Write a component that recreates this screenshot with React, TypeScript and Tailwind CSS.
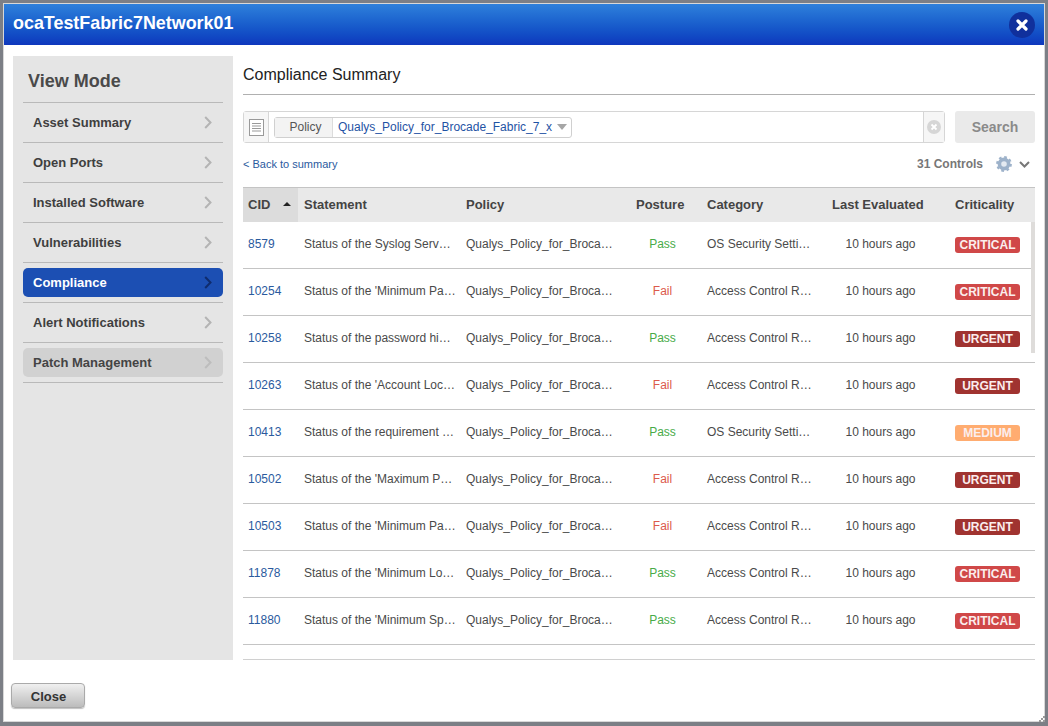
import React from "react";

const menu = ["Asset Summary", "Open Ports", "Installed Software", "Vulnerabilities", "Compliance", "Alert Notifications", "Patch Management"];

const rows = [
  ["8579", "Status of the Syslog Serv…", "Pass", "OS Security Setti…", "CRITICAL"],
  ["10254", "Status of the 'Minimum Pa…", "Fail", "Access Control R…", "CRITICAL"],
  ["10258", "Status of the password hi…", "Pass", "Access Control R…", "URGENT"],
  ["10263", "Status of the 'Account Loc…", "Fail", "Access Control R…", "URGENT"],
  ["10413", "Status of the requirement …", "Pass", "OS Security Setti…", "MEDIUM"],
  ["10502", "Status of the 'Maximum P…", "Fail", "Access Control R…", "URGENT"],
  ["10503", "Status of the 'Minimum Pa…", "Fail", "Access Control R…", "URGENT"],
  ["11878", "Status of the 'Minimum Lo…", "Pass", "Access Control R…", "CRITICAL"],
  ["11880", "Status of the 'Minimum Sp…", "Pass", "Access Control R…", "CRITICAL"],
];

const gridCols = "grid grid-cols-[55px_162px_170px_71px_125px_123px_86px]";

function Chevron({ className }: { className: string }) {
  return (
    <svg width="8" height="13" viewBox="0 0 8 13" className={className}>
      <path d="M1.2 1 L6.5 6.5 L1.2 12" fill="none" stroke="currentColor" strokeWidth="2" />
    </svg>
  );
}

function Badge({ level }: { level: string }) {
  const color = level === "CRITICAL" ? "bg-[#d04848]" : level === "URGENT" ? "bg-[#a03330]" : "bg-[#ffac70]";
  return (
    <span className={`${color} mt-px flex h-4 w-[65px] items-center justify-center rounded-[3px] text-[12px] leading-none font-bold text-[#fbeeee]`}>
      {level}
    </span>
  );
}

export default function App() {
  return (
    <div className="relative h-[726px] w-[1048px] bg-[#7c7f86] pt-[3px] pr-[3px] pb-[4px] pl-[3px] font-['Liberation_Sans',Arial,sans-serif]">
      <div className="flex h-[719px] flex-col border border-[#d8d8d8] bg-white">
        <div className="flex h-[41px] shrink-0 items-center justify-between bg-gradient-to-b from-[#2f80db] to-[#0f37bd] pr-[9px] pl-[9px]">
          <span className="pb-px text-[17.9px] leading-none font-bold text-white">ocaTestFabric7Network01</span>
          <div className="flex h-[26px] w-[26px] items-center justify-center rounded-full bg-[#10309c]">
            <svg width="12" height="12" viewBox="0 0 12 12">
              <path d="M2 2 L10 10 M10 2 L2 10" stroke="#fff" strokeWidth="3.2" strokeLinecap="round" />
            </svg>
          </div>
        </div>

        <div className="flex flex-1 gap-[10px] pt-[11px] pr-[9px] pl-[9px]">
          <aside className="flex h-[604px] w-[220px] shrink-0 flex-col bg-[#e5e5e5] px-[10px]">
            <div className="flex h-[47px] shrink-0 items-center border-b border-[#b9b9b9] pt-[3px] pl-[5px] text-[18px] leading-none font-bold text-[#4a4a4a]">
              View Mode
            </div>
            {menu.map((m) => {
              const active = m === "Compliance";
              const hover = m === "Patch Management";
              return (
                <div key={m} className="h-10 shrink-0 border-b border-[#b9b9b9] pt-[5px]">
                  <div
                    className={`flex h-[29px] items-center justify-between rounded-[5px] pr-[11px] pl-[10px] text-[13px] leading-none font-bold ${
                      active ? "bg-[#1c4fb3] text-white" : hover ? "bg-[#d1d1d1] text-[#444]" : "text-[#3f3f3f]"
                    }`}
                  >
                    <span>{m}</span>
                    <Chevron className={active ? "text-[#0f2c6e]" : hover ? "text-[#bdbdbd]" : "text-[#b4b4b4]"} />
                  </div>
                </div>
              );
            })}
          </aside>

          <main className="flex w-[792px] flex-col">
            <div className="flex h-[39px] shrink-0 items-center border-b border-[#b0b0b0] text-[16px] leading-none text-[#222]">
              Compliance Summary
            </div>

            <div className="mt-4 flex h-8 shrink-0 gap-[10px]">
              <div className="flex w-[702px] rounded-[3px] border border-[#d6d6d6] bg-white">
                <div className="flex w-[25px] shrink-0 items-center justify-center border-r border-[#d6d6d6] bg-[#f6f6f6]">
                  <svg width="15" height="17" viewBox="0 0 15 17">
                    <rect x="0.5" y="0.5" width="14" height="16" fill="#fff" stroke="#999" />
                    <path d="M3 4.5 H12 M3 7 H12 M3 9.5 H12 M3 12 H12" stroke="#999" />
                  </svg>
                </div>
                <div className="flex flex-1 items-center pl-[5px]">
                  <div className="flex h-[21px] w-[298px] items-center rounded-[3px] border border-[#d0d0d0] text-[12px] leading-none">
                    <span className="flex h-full w-[58px] shrink-0 items-center justify-center border-r border-[#dcdcdc] bg-[#f3f3f3] pl-[4px] text-[#555]">Policy</span>
                    <span className="pl-[5px] whitespace-nowrap text-[#1f53a4]">Qualys_Policy_for_Brocade_Fabric_7_x</span>
                    <svg width="10" height="6" viewBox="0 0 10 6" className="ml-[5px] shrink-0">
                      <path d="M0 0 H10 L5 6 Z" fill="#a6a6a6" />
                    </svg>
                  </div>
                </div>
                <div className="flex w-[21px] shrink-0 items-center justify-center border-l border-[#d6d6d6] bg-[#f6f6f6]">
                  <svg width="14" height="14" viewBox="0 0 14 14">
                    <circle cx="7" cy="7" r="7" fill="#d6d6d6" />
                    <path d="M4.5 4.5 L9.5 9.5 M9.5 4.5 L4.5 9.5" stroke="#fff" strokeWidth="1.8" />
                  </svg>
                </div>
              </div>
              <div className="flex w-20 items-center justify-center rounded-[3px] bg-[#eaeaea] text-[14px] leading-none font-bold text-[#8a8a8a]">Search</div>
            </div>

            <div className="flex h-[44px] shrink-0 items-center justify-between pr-[5px] pb-[2px]">
              <span className="text-[11px] leading-none text-[#2a5a9e]">&lt; Back to summary</span>
              <div className="flex items-center">
                <span className="text-[12px] leading-none font-bold text-[#777]">31 Controls</span>
                <svg width="16" height="16" viewBox="0 0 16 16" className="ml-[13px]">
                  <circle cx="8" cy="8" r="4.6" fill="#e4eaf1" stroke="#9db2ca" strokeWidth="3.6" />
                  <circle cx="8" cy="8" r="6.8" fill="none" stroke="#9db2ca" strokeWidth="2.2" strokeDasharray="2.67 2.67" />
                </svg>
                <svg width="11" height="7" viewBox="0 0 11 7" className="ml-[7px]">
                  <path d="M1 1 L5.5 5.5 L10 1" fill="none" stroke="#777" strokeWidth="2" />
                </svg>
              </div>
            </div>

            <div className={`${gridCols} h-[35px] shrink-0 border-t border-[#c4c4c4] bg-[#e9e9e9] pb-[2px] text-[13px] leading-none font-bold text-[#444]`}>
              <div className="-mb-[2px] flex items-center justify-between bg-[#dcdcdc] pr-[7px] pb-[2px] pl-[5px]">
                <span>CID</span>
                <svg width="8" height="4" viewBox="0 0 8 4"><path d="M4 0 L8 4 H0 Z" fill="#222" /></svg>
              </div>
              <div className="flex items-center pl-[6px]">Statement</div>
              <div className="flex items-center pl-[6px]">Policy</div>
              <div className="flex items-center pl-[6px]">Posture</div>
              <div className="flex items-center pl-[6px]">Category</div>
              <div className="flex items-center pl-[6px]">Last Evaluated</div>
              <div className="flex items-center pl-[6px]">Criticality</div>
            </div>

            <div className="relative shrink-0">
              {rows.map((r) => (
                <div key={r[0]} className={`${gridCols} h-[47px] items-center border-b border-[#c4c4c4] pb-[2px] text-[12px] leading-none text-[#4a4a4a]`}>
                  <span className="pl-[5px] text-[#2a5a9e]">{r[0]}</span>
                  <span className="pl-[6px] whitespace-nowrap">{r[1]}</span>
                  <span className="pl-[6px] whitespace-nowrap">Qualys_Policy_for_Broca…</span>
                  <span className={`pr-[6px] text-center ${r[2] === "Pass" ? "text-[#48ab48]" : "text-[#dc5a4c]"}`}>{r[2]}</span>
                  <span className="pl-[6px] whitespace-nowrap">{r[3]}</span>
                  <span className="pr-[14px] text-center whitespace-nowrap">10 hours ago</span>
                  <span className="pl-[6px]"><Badge level={r[4]} /></span>
                </div>
              ))}
              <div className="absolute top-0 right-0 h-[131px] w-1 bg-[#dedcda]" />
            </div>
            <div className="h-[15px] shrink-0 border-b border-[#d0d0d0]" />
          </main>
        </div>

        <div className="flex h-[59px] shrink-0 items-start pt-[21px] pl-[7px]">
          <div className="flex h-[25px] w-[74px] items-center justify-center rounded-[4px] border border-[#aaa] bg-gradient-to-b from-[#f0f0f0] to-[#bcbcbc] pt-[2px] pl-[1px] text-[13px] leading-none font-bold text-[#333] shadow-[0_1px_1px_rgba(0,0,0,0.25)]">
            Close
          </div>
        </div>
      </div>
      <svg width="6" height="6" viewBox="0 0 6 6" className="absolute right-[3px] bottom-[4px]">
        <path d="M4 0h2v2H4z M2 2h2v2H2z M4 4h2v2H4z M0 4h2v2H0z" fill="#9a9a9a" />
      </svg>
    </div>
  );
}
